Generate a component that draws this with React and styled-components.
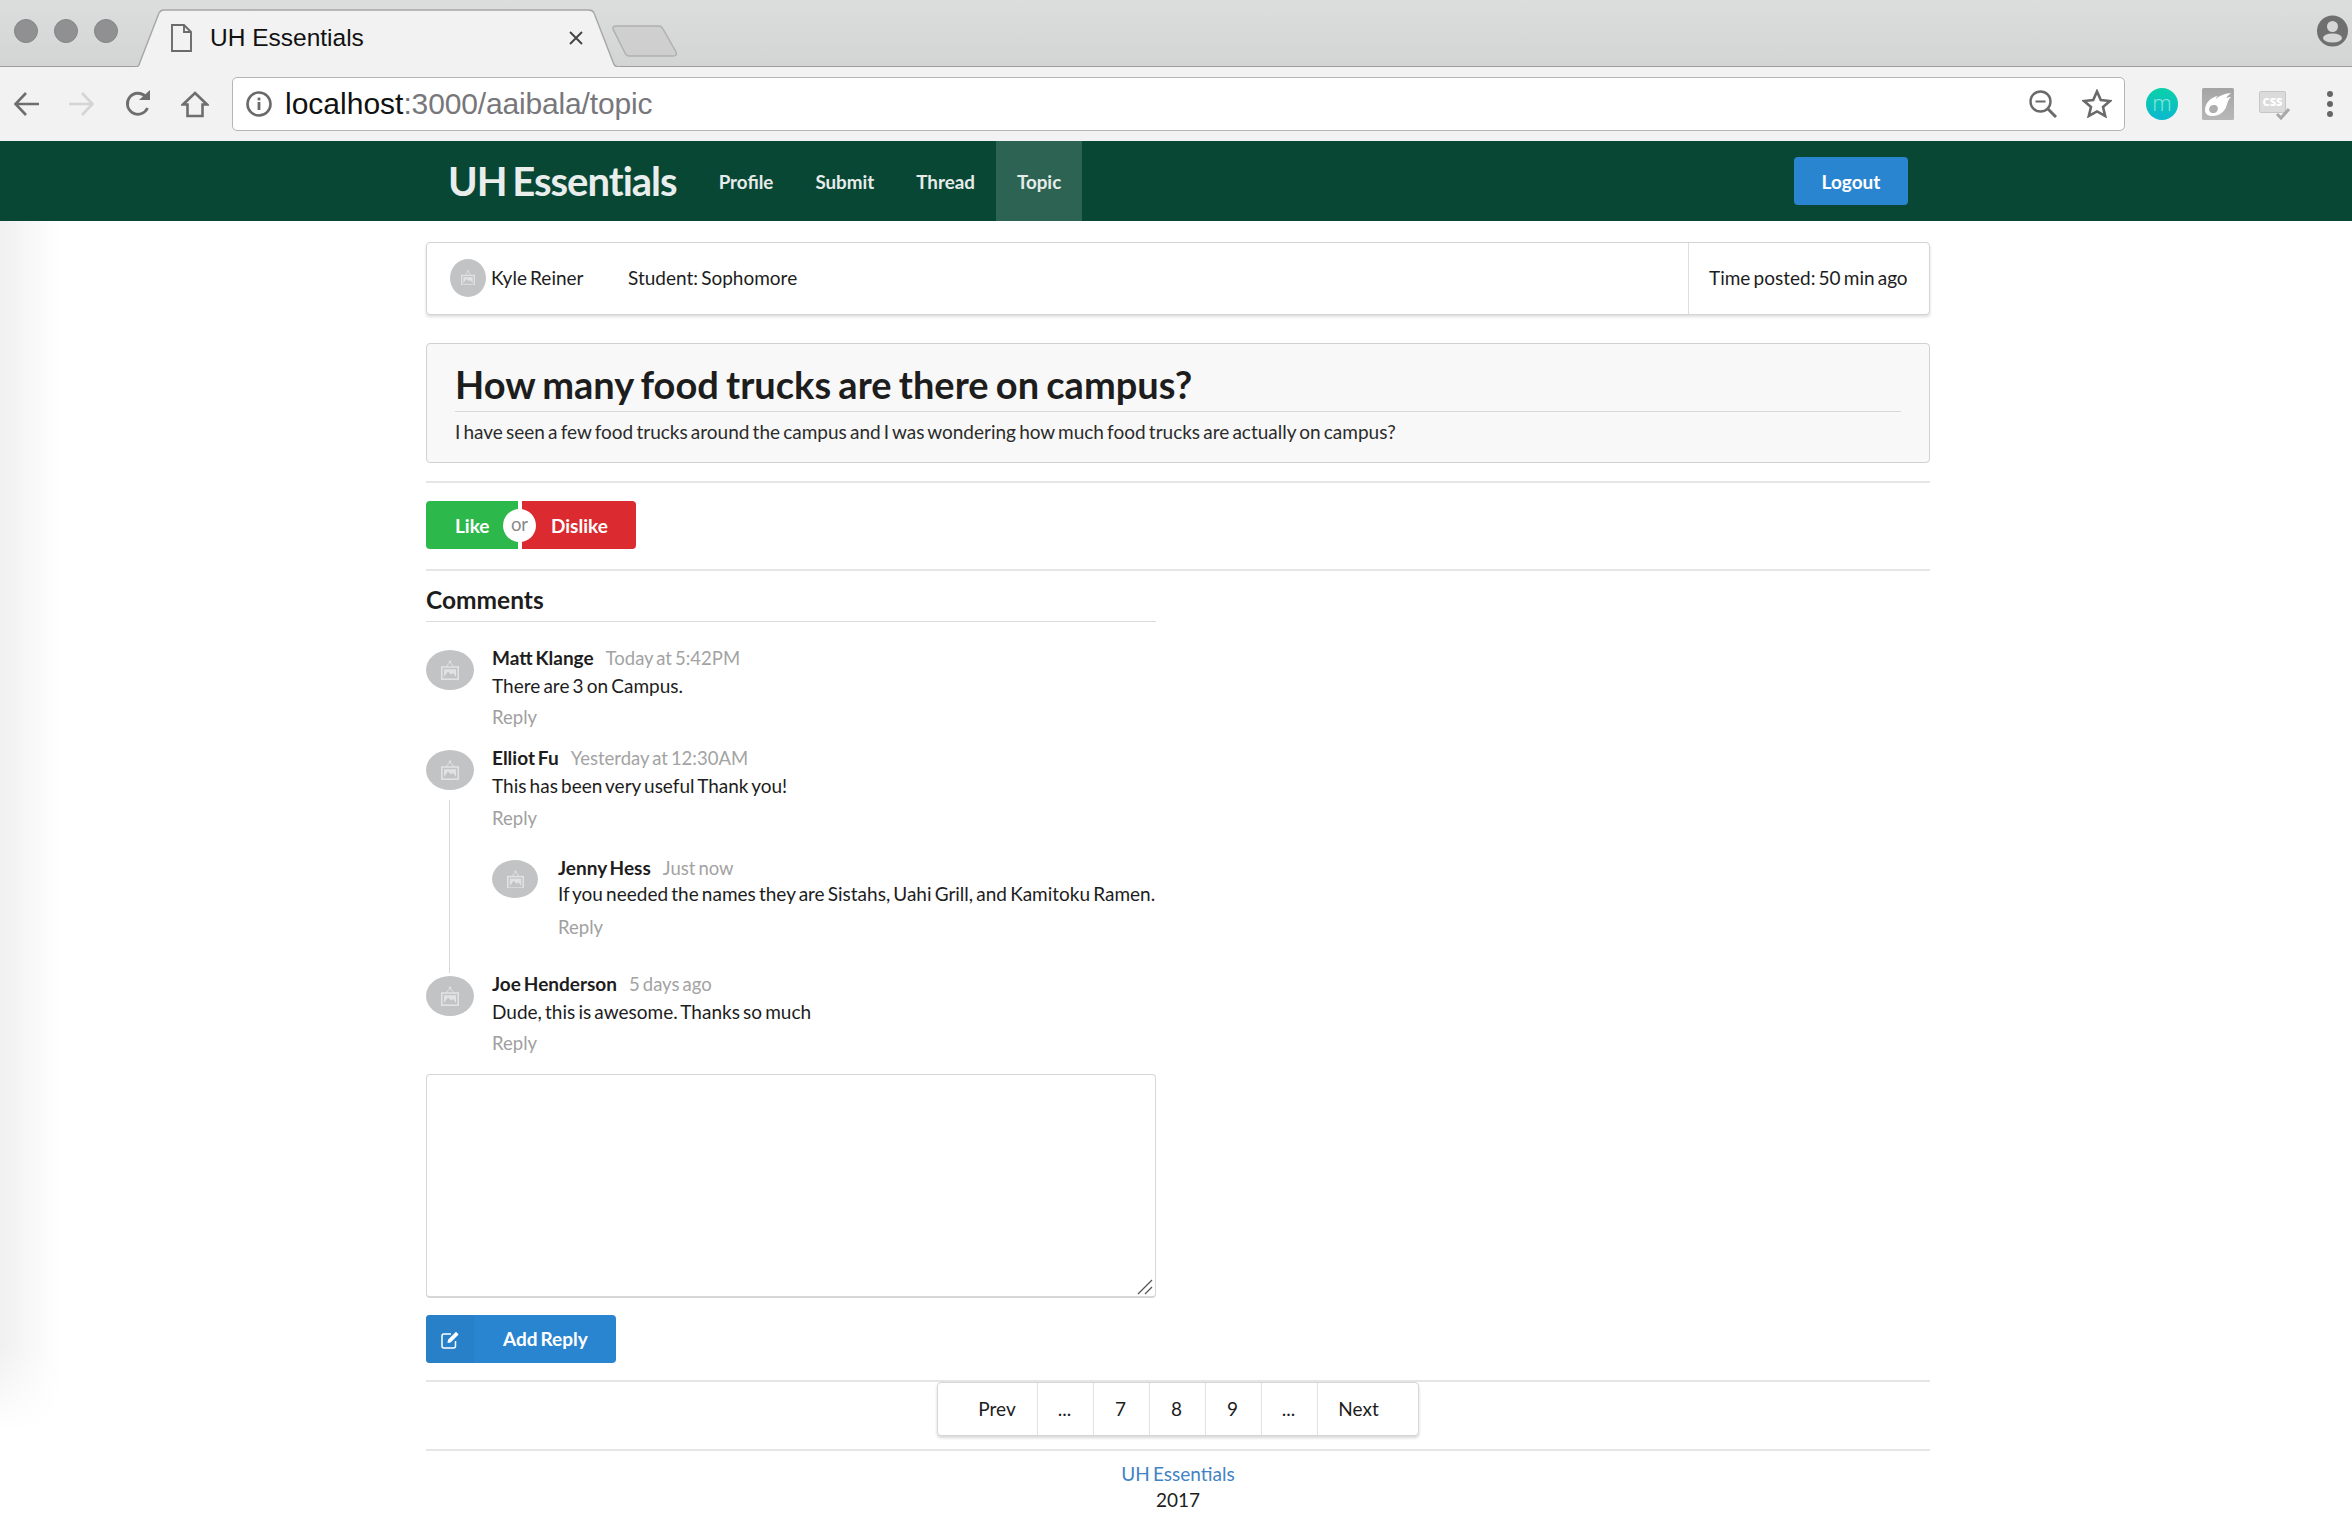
import React from 'react';
import styled, { createGlobalStyle } from 'styled-components';

const GlobalStyle = createGlobalStyle`
  html, body {
    margin: 0;
    padding: 0;
    background: #fff;
  }
  body {
    font-family: Lato, "Open Sans", sans-serif;
    font-size: 19px;
    word-spacing: -1.7px;
    color: #1d1d1d;
    -webkit-font-smoothing: antialiased;
  }
  * {
    box-sizing: border-box;
  }
`;

const Screen = styled.div`
  width: 2352px;
  height: 1537px;
  overflow: hidden;
  display: flex;
  flex-direction: column;
`;

/* browser chrome */
const TabStrip = styled.div`
  height: 67px;
  flex: none;
  position: relative;
  display: flex;
  align-items: flex-start;
  background: linear-gradient(#dcdddd, #d3d4d4);
  border-bottom: 1px solid #9d9d9d;
  word-spacing: normal;
`;

const Lights = styled.div`
  display: flex;
  gap: 16px;
  padding: 19px 0 0 14px;
  width: 135px;
  flex: none;
`;

const Light = styled.span`
  width: 24px;
  height: 24px;
  border-radius: 50%;
  background: #908f92;
  border: 1px solid #858487;
`;

const TabShape = styled.svg`
  position: absolute;
  left: 133px;
  top: 9px;
`;

const NewTabShape = styled.svg`
  position: absolute;
  left: 610px;
  top: 24px;
`;

const Tab = styled.div`
  position: relative;
  display: flex;
  align-items: center;
  width: 475px;
  height: 66px;
  padding: 9px 0 0 36px;
  font-family: "Liberation Sans", Arial, sans-serif;
  font-size: 24.5px;
  color: #111;
`;

const TabTitle = styled.span`
  margin-left: 18px;
  flex: 1;
`;

const TabClose = styled.svg`
  margin-right: 27px;
`;

const ProfileBadge = styled.svg`
  position: absolute;
  right: 4px;
  top: 15px;
`;

const Toolbar = styled.div`
  height: 74px;
  flex: none;
  display: flex;
  align-items: center;
  background: #f2f2f2;
  padding: 0 0 1px 0;
  word-spacing: normal;
`;

const ToolSlot = styled.div`
  width: ${p => p.$width}px;
  flex: none;
  display: flex;
  justify-content: center;
  align-items: center;
`;

const Omnibox = styled.div`
  width: 1893px;
  height: 54px;
  flex: none;
  display: flex;
  align-items: center;
  background: #fff;
  border: 1px solid #b5b5b5;
  border-radius: 5px;
  padding: 0 0 0 13px;
  font-family: "Liberation Sans", Arial, sans-serif;
  font-size: 30px;
  margin-left: 9px;
`;

const UrlHost = styled.span`
  color: #111;
  margin-left: 13px;
`;

const UrlPath = styled.span`
  color: #77777b;
  flex: 1;
  letter-spacing: -0.15px;
`;

const OmniIcons = styled.div`
  display: flex;
  align-items: center;
  gap: 25px;
  padding-right: 12px;
`;

const Extensions = styled.div`
  display: flex;
  align-items: center;
  padding-left: 21px;
  flex: 1;
`;

const MBadge = styled.div`
  width: 32px;
  height: 32px;
  border-radius: 50%;
  background: linear-gradient(#0bd0a8, #0cb8cf);
  color: #8fe6e0;
  font-family: "Open Sans", sans-serif;
  font-weight: 300;
  font-size: 22px;
  line-height: 28px;
  text-align: center;
`;

const FlameBadge = styled.svg`
  margin-left: 24px;
`;

const CssBadge = styled.div`
  position: relative;
  margin-left: 25px;
  width: 27px;
  height: 22px;
  margin-top: -4px;
  background: #dbdbdb;
  border: 1px solid #c6c6c6;
  border-radius: 2px;
  color: #fff;
  font-family: "Open Sans", sans-serif;
  font-weight: 800;
  font-size: 11px;
  line-height: 19px;
  text-align: center;
`;

const CssCheck = styled.svg`
  position: absolute;
  right: -6px;
  bottom: -9px;
`;

const MenuDots = styled.svg`
  margin-left: 41px;
`;

/* site header */
const NavBar = styled.div`
  height: 80px;
  flex: none;
  background: #084734;
`;

const NavInner = styled.div`
  width: 1504px;
  height: 100%;
  margin-left: 426px;
  display: flex;
  align-items: stretch;
  padding: 0 22px 0 22px;
`;

const Brand = styled.div`
  font-size: 40px;
  font-weight: 700;
  color: #e9eeec;
  line-height: 80px;
  letter-spacing: -1px;
  word-spacing: -3px;
  margin-right: 21px;
`;

const NavLink = styled.div`
  display: flex;
  align-items: center;
  padding: 0 21px;
  font-size: 18.8px;
  font-weight: 700;
  color: #e6ecea;
  background: ${p => (p.$active ? '#2d6353' : 'transparent')};
`;

const NavSpacer = styled.div`
  flex: 1;
`;

const LogoutButton = styled.div`
  align-self: center;
  width: 114px;
  height: 48px;
  border-radius: 4px;
  background: #2a85d0;
  color: #fff;
  font-size: 19px;
  font-weight: 700;
  line-height: 49px;
  text-align: center;
`;

/* page */
const Page = styled.div`
  flex: 1;
  background:
    linear-gradient(to bottom, rgba(255, 255, 255, 0) 1125px, #fff 1209px),
    linear-gradient(to right, #f0f0f0, #fff 60px);
`;

const Container = styled.div`
  width: 1504px;
  margin-left: 426px;
  padding-top: 21px;
`;

const InfoCard = styled.div`
  height: 73px;
  display: flex;
  align-items: center;
  background: #fff;
  border: 1px solid #d4d4d5;
  border-radius: 4px;
  box-shadow: 0 2px 3px rgba(34, 36, 38, 0.15);
`;

const InfoLeft = styled.div`
  flex: 1;
  display: flex;
  align-items: center;
  padding-left: 23px;
  margin-top: -2px;
`;

const InfoName = styled.span`
  margin-left: 5px;
  width: 137px;
`;

const InfoRight = styled.div`
  width: 241px;
  height: 100%;
  display: flex;
  align-items: center;
  padding: 0 0 2px 20px;
  border-left: 1px solid #dedede;
`;

const AvatarShell = styled.div`
  width: ${p => p.$w}px;
  height: ${p => p.$h}px;
  flex: none;
  border-radius: 50%;
  background: #c2c3c4;
  display: flex;
  align-items: center;
  justify-content: center;
`;

const TitleCard = styled.div`
  margin-top: 28px;
  height: 120px;
  background: #f8f8f8;
  border: 1px solid #d0d1d2;
  border-radius: 4px;
  padding: 18px 28px 0;
`;

const Title = styled.h1`
  margin: 0;
  height: 50px;
  font-size: 38px;
  font-weight: 700;
  line-height: 44px;
  word-spacing: -2px;
  color: #1d1d1d;
  border-bottom: 1px solid #d8d8d8;
`;

const Question = styled.p`
  margin: 7px 0 0;
  line-height: 26px;
  color: #2b2b2b;
`;

const Divider = styled.hr`
  margin: ${p => p.$top}px 0 ${p => p.$bottom}px;
  border: 0;
  border-top: 2px solid #e5e5e6;
`;

const VoteGroup = styled.div`
  position: relative;
  display: flex;
  width: 210px;
  height: 48px;
  color: #fff;
  font-size: 19px;
  font-weight: 700;
  line-height: 50px;
`;

const LikeButton = styled.div`
  width: 92px;
  padding-left: 29px;
  background: #2db84b;
  border-radius: 4px 0 0 4px;
`;

const DislikeButton = styled.div`
  width: 114px;
  margin-left: 4px;
  padding-left: 29px;
  background: #db2a30;
  border-radius: 0 4px 4px 0;
`;

const OrBadge = styled.div`
  position: absolute;
  left: 77px;
  top: 8px;
  width: 33px;
  height: 33px;
  border-radius: 50%;
  background: #fff;
  color: #8a8a8a;
  font-size: 18.5px;
  font-weight: 400;
  line-height: 30px;
  text-align: center;
`;

const CommentColumn = styled.div`
  width: 730px;
`;

const CommentsHeader = styled.h3`
  margin: 0 0 30px;
  height: 36px;
  font-size: 24.5px;
  font-weight: 700;
  line-height: 28px;
  border-bottom: 1px solid #dcdcdd;
`;

const CommentRow = styled.div`
  display: flex;
  margin-top: ${p => p.$top || 0}px;
  padding-bottom: ${p => p.$bottom || 0}px;
`;

const CommentSide = styled.div`
  width: ${p => p.$width}px;
  flex: none;
  margin-top: -2px;
  display: flex;
  flex-direction: column;
`;

const ThreadLine = styled.div`
  margin: 10px 0 -32px 23px;
  width: 1px;
  flex: 1;
  background: #d9d9da;
`;

const CommentBody = styled.div`
  flex: 1;
  margin-top: -2px;
  white-space: nowrap;
`;

const MetaLine = styled.div`
  height: 16px;
  line-height: 16px;
  display: flex;
  gap: 12px;
`;

const Author = styled.span`
  font-weight: 700;
  color: #1d1d1d;
`;

const Stamp = styled.span`
  color: #a3a3a3;
  font-size: 18.5px;
`;

const CommentText = styled.div`
  margin-top: ${p => p.$top}px;
  line-height: 28px;
  color: #1d1d1d;
`;

const ReplyLink = styled.div`
  margin-top: ${p => p.$top}px;
  font-size: 18.5px;
  line-height: 28px;
  color: #a0a0a0;
`;

const ReplyBoxWrap = styled.div`
  position: relative;
  margin-top: 17px;
`;

const ReplyBox = styled.textarea`
  display: block;
  width: 730px;
  height: 224px;
  background: #fff;
  border: 1px solid #d6d6d7;
  border-bottom-width: 2px;
  border-radius: 4px;
  outline: none;
  resize: none;
`;

const ResizeGrip = styled.svg`
  position: absolute;
  right: 3px;
  bottom: 3px;
`;

const AddReplyButton = styled.div`
  margin-top: 17px;
  display: flex;
  width: 190px;
  height: 48px;
  border-radius: 4px;
  overflow: hidden;
  background: #2a85d0;
  color: #fff;
  font-size: 19px;
  font-weight: 700;
  line-height: 47px;
`;

const ButtonIcon = styled.div`
  width: 48px;
  flex: none;
  background: #2880c9;
  display: flex;
  align-items: center;
  justify-content: center;
`;

const ButtonLabel = styled.span`
  margin-left: 29px;
`;

const PagerWrap = styled.div`
  display: flex;
  justify-content: center;
`;

const Pager = styled.div`
  display: flex;
  width: 482px;
  height: 54px;
  background: #fff;
  border: 1px solid #d6d6d7;
  border-radius: 4px;
  box-shadow: 0 2px 3px rgba(34, 36, 38, 0.18);
`;

const PagerItem = styled.div`
  width: ${p => p.$width}px;
  flex: none;
  display: flex;
  align-items: center;
  justify-content: center;
  border-left: ${p => (p.$first ? '0' : '1px solid #e2e2e3')};
  padding: 0 ${p => p.$right || 0}px 2px ${p => p.$left || 0}px;
`;

const Footer = styled.div`
  text-align: center;
  line-height: 26px;
  padding-top: 10px;
`;

const FooterLink = styled.div`
  color: #4183c4;
`;

// placeholder picture shown in the grey avatars
const PictureIcon = ({ size = 18, color = '#e2e2e3' }) => (
  <svg width={size} height={(size * 20) / 18} viewBox="0 0 18 20">
    <path d="M5 7 L9 2 L13 7" stroke={color} strokeWidth="1" fill="none" />
    <circle cx="9" cy="1.6" r="1.2" fill={color} />
    <rect x="0.8" y="7" width="16.4" height="12.2" fill="none" stroke={color} strokeWidth="1.6" />
    <rect x="3" y="9.2" width="12" height="7.8" fill={color} />
    <path d="M3 17 L7 11.5 L10 14.5 L12 13 L15 17 Z" fill="#c2c3c4" />
  </svg>
);

const Avatar = ({ w = 48, h = 40, icon = 18 }) => (
  <AvatarShell $w={w} $h={h}>
    <PictureIcon size={icon} />
  </AvatarShell>
);

const BackIcon = ({ color = '#6e6e6e', flip }) => (
  <svg width="28" height="26" viewBox="0 0 28 26" style={flip ? { transform: 'scaleX(-1)' } : undefined}>
    <path d="M26 13 H3 M13 2 L2.5 13 L13 24" fill="none" stroke={color} strokeWidth="2.6" />
  </svg>
);

export default function App() {
  return (
    <Screen>
      <GlobalStyle />
      <TabStrip>
        <Lights>
          <Light />
          <Light />
          <Light />
        </Lights>
        <TabShape width="490" height="58" viewBox="0 0 490 58">
          <path
            d="M1 58 C6 58 6 56 7 53 L26 4 C27 2 28 1 31 1 L456 1 C459 1 460 2 461 4 L480 53 C481 56 482 58 487 58"
            fill="#f2f2f2"
            stroke="#a6a6a6"
            strokeWidth="1.4"
          />
        </TabShape>
        <NewTabShape width="72" height="36" viewBox="0 0 72 36">
          <path
            d="M3 5 C2.5 3 3.5 2 6 2 L49 2 C51 2 52 3 53 5 L66 28 C67 31 66 32 63 32 L19 32 C17 32 16 31 15 29 Z"
            fill="#cfcfcf"
            stroke="#b0b0b0"
            strokeWidth="1.5"
          />
        </NewTabShape>
        <Tab>
          <svg width="21" height="28" viewBox="0 0 21 28">
            <path d="M1 1 H13 L20 8 V27 H1 Z M13 1 V8 H20" fill="none" stroke="#6b6b6b" strokeWidth="1.9" />
          </svg>
          <TabTitle>UH Essentials</TabTitle>
          <TabClose width="14" height="14" viewBox="0 0 14 14">
            <path d="M1 1 L13 13 M13 1 L1 13" stroke="#444" strokeWidth="1.9" />
          </TabClose>
        </Tab>
        <ProfileBadge width="31" height="32" viewBox="0 0 31 32">
          <circle cx="15.5" cy="16" r="15.5" fill="#6f6f6f" />
          <circle cx="15.5" cy="11.5" r="5.5" fill="#d6d6d6" />
          <ellipse cx="15.5" cy="23" rx="9.5" ry="4.5" fill="#d6d6d6" />
        </ProfileBadge>
      </TabStrip>
      <Toolbar>
        <ToolSlot $width={53}>
          <BackIcon />
        </ToolSlot>
        <ToolSlot $width={56}>
          <BackIcon color="#d4d4d4" flip />
        </ToolSlot>
        <ToolSlot $width={57}>
          <svg width="28" height="28" viewBox="0 0 28 28">
            <path d="M23.5 18 A10.5 10.5 0 1 1 21.5 6.5" fill="none" stroke="#6e6e6e" strokeWidth="2.8" />
            <path d="M15 10 H26 V0 Z" fill="#6e6e6e" />
          </svg>
        </ToolSlot>
        <ToolSlot $width={57}>
          <svg width="28" height="28" viewBox="0 0 28 28">
            <path d="M14 3 L26 14.5 H21.5 V26 H6.5 V14.5 H2 Z" fill="none" stroke="#6e6e6e" strokeWidth="2.6" />
          </svg>
        </ToolSlot>
        <Omnibox>
          <svg width="26" height="26" viewBox="0 0 26 26">
            <circle cx="13" cy="13" r="11.5" fill="none" stroke="#6a6a6a" strokeWidth="2.6" />
            <rect x="11.6" y="11" width="2.8" height="8" fill="#6a6a6a" />
            <rect x="11.6" y="6.6" width="2.8" height="2.8" fill="#6a6a6a" />
          </svg>
          <UrlHost>localhost</UrlHost>
          <UrlPath>:3000/aaibala/topic</UrlPath>
          <OmniIcons>
            <svg width="28" height="28" viewBox="0 0 28 28">
              <circle cx="11.5" cy="11.5" r="10" fill="none" stroke="#6a6a6a" strokeWidth="2.4" />
              <path d="M6.5 11.5 H16.5" stroke="#6a6a6a" strokeWidth="2" />
              <path d="M18.5 18.5 L27 27" stroke="#6a6a6a" strokeWidth="3" />
            </svg>
            <svg width="30" height="29" viewBox="0 0 30 29">
              <path
                d="M15 2.5 L18.8 11 L28 12 L21 18 L23.2 27 L15 22.4 L6.8 27 L9 18 L2 12 L11.2 11 Z"
                fill="none"
                stroke="#6a6a6a"
                strokeWidth="2.6"
              />
            </svg>
          </OmniIcons>
        </Omnibox>
        <Extensions>
          <MBadge>m</MBadge>
          <FlameBadge width="32" height="32" viewBox="0 0 32 32">
            <defs>
              <linearGradient id="flameGrey" x1="0" y1="0" x2="0" y2="1">
                <stop offset="0" stopColor="#a4a4a4" />
                <stop offset="1" stopColor="#b8b8b8" />
              </linearGradient>
            </defs>
            <rect width="32" height="32" rx="1.5" fill="url(#flameGrey)" />
            <path
              d="M3 22 C3 15 9 9 16 8 C14.5 9 14 10 14 11 C18 7 24 5.5 29 5 C26.5 7 25 8.5 24.5 10 C26 9.5 28 9 29 9 C26 11.5 26 14 24.5 18 C22.5 24 17 28 11 28 C6 28 3 26 3 22 Z"
              fill="#fff"
            />
            <ellipse cx="11.5" cy="21" rx="4.5" ry="4" fill="#aeaeae" transform="rotate(-25 11.5 21)" />
          </FlameBadge>
          <CssBadge>
            CSS
            <CssCheck width="16" height="14" viewBox="0 0 16 14">
              <path d="M2 7 L6 11 L14 2" fill="none" stroke="#a9a9a9" strokeWidth="3" />
            </CssCheck>
          </CssBadge>
          <MenuDots width="6" height="26" viewBox="0 0 6 26">
            <circle cx="3" cy="3" r="3" fill="#666" />
            <circle cx="3" cy="13" r="3" fill="#666" />
            <circle cx="3" cy="23" r="3" fill="#666" />
          </MenuDots>
        </Extensions>
      </Toolbar>

      <NavBar>
        <NavInner>
          <Brand>UH Essentials</Brand>
          <NavLink>Profile</NavLink>
          <NavLink>Submit</NavLink>
          <NavLink>Thread</NavLink>
          <NavLink $active>Topic</NavLink>
          <NavSpacer />
          <LogoutButton>Logout</LogoutButton>
        </NavInner>
      </NavBar>

      <Page>
        <Container>
          <InfoCard>
            <InfoLeft>
              <Avatar w={36} h={38} icon={14} />
              <InfoName>Kyle Reiner</InfoName>
              <span>Student: Sophomore</span>
            </InfoLeft>
            <InfoRight>Time posted: 50 min ago</InfoRight>
          </InfoCard>

          <TitleCard>
            <Title>How many food trucks are there on campus?</Title>
            <Question>
              I have seen a few food trucks around the campus and I was wondering how much food trucks are actually on campus?
            </Question>
          </TitleCard>

          <Divider $top={18} $bottom={18} />

          <VoteGroup>
            <LikeButton>Like</LikeButton>
            <DislikeButton>Dislike</DislikeButton>
            <OrBadge>or</OrBadge>
          </VoteGroup>

          <Divider $top={20} $bottom={15} />

          <CommentColumn>
            <CommentsHeader>Comments</CommentsHeader>

            <CommentRow>
              <CommentSide $width={66}>
                <Avatar />
              </CommentSide>
              <CommentBody>
                <MetaLine>
                  <Author>Matt Klange</Author>
                  <Stamp>Today at 5:42PM</Stamp>
                </MetaLine>
                <CommentText $top={6}>There are 3 on Campus.</CommentText>
                <ReplyLink $top={3}>Reply</ReplyLink>
              </CommentBody>
            </CommentRow>

            <CommentRow $top={21} $bottom={37}>
              <CommentSide $width={66}>
                <Avatar />
                <ThreadLine />
              </CommentSide>
              <CommentBody>
                <MetaLine>
                  <Author>Elliot Fu</Author>
                  <Stamp>Yesterday at 12:30AM</Stamp>
                </MetaLine>
                <CommentText $top={6}>This has been very useful Thank you!</CommentText>
                <ReplyLink $top={4}>Reply</ReplyLink>

                <CommentRow $top={30}>
                  <CommentSide $width={66}>
                    <Avatar w={46} h={38} icon={17} />
                  </CommentSide>
                  <CommentBody>
                    <MetaLine>
                      <Author>Jenny Hess</Author>
                      <Stamp>Just now</Stamp>
                    </MetaLine>
                    <CommentText $top={4}>
                      If you needed the names they are Sistahs, Uahi Grill, and Kamitoku Ramen.
                    </CommentText>
                    <ReplyLink $top={5}>Reply</ReplyLink>
                  </CommentBody>
                </CommentRow>
              </CommentBody>
            </CommentRow>

            <CommentRow>
              <CommentSide $width={66}>
                <Avatar />
              </CommentSide>
              <CommentBody>
                <MetaLine>
                  <Author>Joe Henderson</Author>
                  <Stamp>5 days ago</Stamp>
                </MetaLine>
                <CommentText $top={6}>Dude, this is awesome. Thanks so much</CommentText>
                <ReplyLink $top={3}>Reply</ReplyLink>
              </CommentBody>
            </CommentRow>

            <ReplyBoxWrap>
              <ReplyBox />
              <ResizeGrip width="16" height="16" viewBox="0 0 16 16">
                <path d="M1 15 L15 1 M8 15 L15 8" stroke="#555" strokeWidth="1.3" />
              </ResizeGrip>
            </ReplyBoxWrap>
            <AddReplyButton>
              <ButtonIcon>
                <svg width="19" height="19" viewBox="0 0 19 19">
                  <path d="M14.5 11 V16 A2 2 0 0 1 12.5 18 H3 A2 2 0 0 1 1 16 V6 A2 2 0 0 1 3 4 H10" fill="none" stroke="#fff" strokeWidth="1.5" />
                  <path d="M6.5 13 L7 9.8 L15 1.8 L17.6 4.4 L9.6 12.4 Z" fill="#fff" />
                </svg>
              </ButtonIcon>
              <ButtonLabel>Add Reply</ButtonLabel>
            </AddReplyButton>
          </CommentColumn>

          <Divider $top={17} $bottom={0} />

          <PagerWrap>
            <Pager>
              <PagerItem $first $width={99} $left={19}>Prev</PagerItem>
              <PagerItem $width={56} $right={2}>...</PagerItem>
              <PagerItem $width={56} $right={2}>7</PagerItem>
              <PagerItem $width={56} $right={2}>8</PagerItem>
              <PagerItem $width={56} $right={2}>9</PagerItem>
              <PagerItem $width={56} $right={2}>...</PagerItem>
              <PagerItem $width={100} $right={18}>Next</PagerItem>
            </Pager>
          </PagerWrap>

          <Divider $top={13} $bottom={0} />

          <Footer>
            <FooterLink>UH Essentials</FooterLink>
            <div>2017</div>
          </Footer>
        </Container>
      </Page>
    </Screen>
  );
}
